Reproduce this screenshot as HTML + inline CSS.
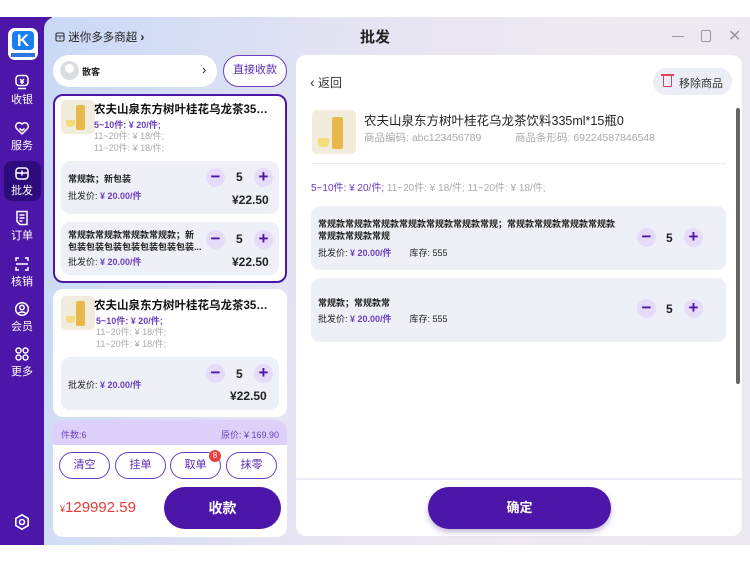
<!DOCTYPE html><html><head><meta charset="utf-8"><style>
*{margin:0;padding:0;box-sizing:border-box}
body{width:750px;height:562px;background:#fff;font-family:"Liberation Sans","Noto Sans CJK SC",sans-serif;position:relative;overflow:hidden;color:#222}
.abs{position:absolute}
#side{left:0;top:17px;width:52px;height:528px;background:#4c17a8}
#main{left:44px;top:17px;width:706px;height:528px;border-radius:12px 0 0 0;background:linear-gradient(100deg,#c9d9f6 0%,#e6e4f3 40%,#efe9f1 70%,#ebe8f2 100%)}
.nav{position:absolute;left:0;width:44px;text-align:center;color:#fff;font-size:11px}
.nav svg{display:block;margin:0 auto 1px}
.card{background:#fff;border-radius:10px}
.pill{border:1.5px solid #6a3fc0;border-radius:16px;color:#5a2bb4;text-align:center;background:#fff}
.t1{font-size:11.5px;font-weight:bold;color:#111;white-space:nowrap;width:184px;overflow:hidden;text-overflow:ellipsis}
.pu{color:#6a3fc0}
.gr{color:#aaa}
.sub{background:#eef0f8;border-radius:9px}
.btn{width:19px;height:19px;border-radius:50%;background:#e6dcfa;color:#4c17a8;text-align:center;line-height:18px;font-size:17px;font-weight:bold}
.img{background:#f2ecdc;border-radius:5px;width:34px;height:34px}
.img i{position:absolute;left:15px;top:5px;width:9px;height:25px;background:#e8b84a;border-radius:2px}
.img b{position:absolute;left:5px;top:20px;width:9px;height:7px;background:#f4dc7a;border-radius:0 0 4px 4px}
</style></head><body>
<div id="side" class="abs"></div>
<div id="main" class="abs"></div>
<div class="abs" style="left:8px;top:28px;width:30px;height:32px;background:#fff;border-radius:7px"></div>
<div class="abs" style="left:12px;top:31px;width:22px;height:19px;background:#1d7ef0;border-radius:4px;color:#fff;font-weight:bold;font-size:17px;text-align:center;line-height:19px">K</div>
<div class="abs" style="left:11px;top:53px;width:24px;height:4px;background:#3470e0"></div>
<div class="nav" style="top:74px"><svg width="16" height="16" viewBox="0 0 16 16" fill="none" stroke="#fff" stroke-width="1.5"><rect x="2" y="1.5" width="12" height="10" rx="3"/><path d="M4 14.5h8M6 5l2 2 2-2M8 7v3M6 8h4"/></svg>收银</div>
<div class="nav" style="top:120px"><svg width="16" height="16" viewBox="0 0 16 16" fill="none" stroke="#fff" stroke-width="1.5"><path d="M8 14L2.5 8.5A3.2 3.2 0 018 4a3.2 3.2 0 015.5 4.5z"/><path d="M5.5 8.5l2.5 2 2.5-2"/></svg>服务</div>
<div class="abs" style="left:4px;top:161px;width:37px;height:40px;background:#2e0b7a;border-radius:8px"></div>
<div class="nav" style="top:165px"><svg width="16" height="16" viewBox="0 0 16 16" fill="none" stroke="#fff" stroke-width="1.5"><rect x="2" y="3" width="12" height="11" rx="3"/><path d="M2 8h12M8 5.5v5M5.5 8h5"/></svg>批发</div>
<div class="nav" style="top:210px"><svg width="16" height="16" viewBox="0 0 16 16" fill="none" stroke="#fff" stroke-width="1.5"><path d="M3 1.5h10v13H6l-3-3z"/><path d="M5.5 5h5M5.5 8h5M5.5 11h3"/></svg>订单</div>
<div class="nav" style="top:256px"><svg width="16" height="16" viewBox="0 0 16 16" fill="none" stroke="#fff" stroke-width="1.5"><path d="M2 5V2h3M11 2h3v3M14 11v3h-3M5 14H2v-3M2 8h12"/></svg>核销</div>
<div class="nav" style="top:301px"><svg width="16" height="16" viewBox="0 0 16 16" fill="none" stroke="#fff" stroke-width="1.5"><circle cx="8" cy="8" r="6.3"/><circle cx="8" cy="6.5" r="2.2"/><path d="M4.5 12.5c1-2 6-2 7 0"/></svg>会员</div>
<div class="nav" style="top:346px"><svg width="16" height="16" viewBox="0 0 16 16" fill="none" stroke="#fff" stroke-width="1.5"><circle cx="4.5" cy="4.5" r="2.5"/><circle cx="11.5" cy="4.5" r="2.5"/><circle cx="4.5" cy="11.5" r="2.5"/><circle cx="11.5" cy="11.5" r="2.5"/></svg>更多</div>
<div class="nav" style="top:513px"><svg width="18" height="18" viewBox="0 0 18 18" fill="none" stroke="#fff" stroke-width="1.6"><path d="M9 1.8l6.2 3.6v7.2L9 16.2l-6.2-3.6V5.4z"/><circle cx="9" cy="9" r="2.5"/></svg></div>

<div class="abs" style="left:55px;top:29px;font-size:11.5px;color:#222"><svg width="10" height="10" viewBox="0 0 10 10" fill="none" stroke="#333" stroke-width="1.1" style="vertical-align:-1px"><rect x="1" y="1" width="8" height="8" rx="1.5"/><path d="M1 4h8M4 6h2"/></svg> 迷你多多商超 <b style="font-size:12px">›</b></div>
<div class="abs" style="left:360px;top:26px;font-size:15px;font-weight:bold">批发</div>
<div class="abs" style="left:672px;top:36px;width:12px;height:1.3px;background:#999"></div>
<div class="abs" style="left:701px;top:30px;width:10px;height:12px;border:1.3px solid #999;border-radius:2px"></div>
<div class="abs" style="left:728px;top:26px;font-size:16px;color:#999">✕</div>

<div class="abs" style="left:53px;top:55px;width:164px;height:32px;background:#fff;border-radius:16px"></div>
<div class="abs" style="left:60px;top:61px;width:19px;height:19px;border-radius:50%;background:#dcdde3"></div>
<div class="abs" style="left:65px;top:64px;width:9px;height:9px;border-radius:50%;background:#fff"></div>
<div class="abs" style="left:82px;top:65px;font-size:9px;font-weight:bold">散客</div>
<div class="abs" style="left:202px;top:62px;font-size:13px">›</div>
<div class="abs pill" style="left:223px;top:55px;width:64px;height:32px;line-height:29px;font-size:11px">直接收款</div>

<div class="abs card" style="left:53px;top:94px;width:234px;height:189px;border:2px solid #4c17a8"></div>
<div class="abs img" style="left:61px;top:100px"><i></i><b></b></div>
<div class="abs t1" style="left:94px;top:101px">农夫山泉东方树叶桂花乌龙茶35ml*15瓶装</div>
<div class="abs pu" style="left:94px;top:118px;font-size:9px;font-weight:bold">5~10件: ¥ 20/件;</div>
<div class="abs gr" style="left:94px;top:130px;font-size:9px;line-height:12px">11~20件: ¥ 18/件;<br>11~20件: ¥ 18/件;</div>
<div class="abs sub" style="left:61px;top:161px;width:218px;height:53px"></div>
<div class="abs" style="left:68px;top:172px;font-size:9px;font-weight:bold">常规款；新包装</div>
<div class="abs" style="left:68px;top:189px;font-size:9px">批发价: <b class="pu">¥ 20.00/件</b></div>
<div class="abs btn" style="left:206px;top:168px">−</div>
<div class="abs" style="left:236px;top:170px;font-size:12px;font-weight:bold">5</div>
<div class="abs btn" style="left:254px;top:168px">+</div>
<div class="abs" style="left:232px;top:193px;font-size:12px;font-weight:bold">¥22.50</div>
<div class="abs sub" style="left:61px;top:222px;width:218px;height:53px"></div>
<div class="abs" style="left:68px;top:229px;font-size:9px;font-weight:bold;line-height:12px">常规款常规款常规款常规款；新<br>包装包装包装包装包装包装包装...</div>
<div class="abs" style="left:68px;top:255px;font-size:9px">批发价: <b class="pu">¥ 20.00/件</b></div>
<div class="abs btn" style="left:206px;top:230px">−</div>
<div class="abs" style="left:236px;top:232px;font-size:12px;font-weight:bold">5</div>
<div class="abs btn" style="left:254px;top:230px">+</div>
<div class="abs" style="left:232px;top:255px;font-size:12px;font-weight:bold">¥22.50</div>

<div class="abs card" style="left:53px;top:289px;width:234px;height:128px"></div>
<div class="abs img" style="left:61px;top:296px"><i></i><b></b></div>
<div class="abs t1" style="left:94px;top:297px">农夫山泉东方树叶桂花乌龙茶35ml*15瓶装</div>
<div class="abs pu" style="left:96px;top:314px;font-size:9px;font-weight:bold">5~10件: ¥ 20/件;</div>
<div class="abs gr" style="left:96px;top:326px;font-size:9px;line-height:12px">11~20件: ¥ 18/件;<br>11~20件: ¥ 18/件;</div>
<div class="abs sub" style="left:61px;top:357px;width:218px;height:53px"></div>
<div class="abs" style="left:68px;top:378px;font-size:9px">批发价: <b class="pu">¥ 20.00/件</b></div>
<div class="abs btn" style="left:206px;top:364px">−</div>
<div class="abs" style="left:236px;top:367px;font-size:12px;font-weight:bold">5</div>
<div class="abs btn" style="left:254px;top:364px">+</div>
<div class="abs" style="left:230px;top:389px;font-size:12px;font-weight:bold">¥22.50</div>

<div class="abs" style="left:53px;top:420px;width:234px;height:117px;background:#fff;border-radius:10px;overflow:hidden"><div style="height:25px;background:#ddd1fb;font-size:9px;color:#6a3fc0;padding:8px 8px;display:flex;justify-content:space-between"><span>件数:6</span><span>原价: ¥ 169.90</span></div></div>
<div class="abs pill" style="left:59px;top:452px;width:51px;height:27px;line-height:24px;font-size:11px">清空</div>
<div class="abs pill" style="left:115px;top:452px;width:51px;height:27px;line-height:24px;font-size:11px">挂单</div>
<div class="abs pill" style="left:170px;top:452px;width:51px;height:27px;line-height:24px;font-size:11px">取单</div>
<div class="abs pill" style="left:226px;top:452px;width:51px;height:27px;line-height:24px;font-size:11px">抹零</div>
<div class="abs" style="left:209px;top:450px;width:12px;height:12px;border-radius:50%;background:#e8413c;color:#fff;font-size:8px;text-align:center;line-height:12px">8</div>
<div class="abs" style="left:60px;top:499px;color:#e83a3a;font-size:15px"><span style="font-size:9px">¥</span>129992.59</div>
<div class="abs" style="left:164px;top:487px;width:117px;height:42px;border-radius:21px;background:#4c17a8;color:#fff;font-size:14px;font-weight:bold;text-align:center;line-height:42px">收款</div>

<div class="abs card" style="left:296px;top:55px;width:446px;height:481px"></div>
<div class="abs" style="left:310px;top:74px;font-size:12px;color:#333"><span style="font-size:14px">‹</span> 返回</div>
<div class="abs" style="left:653px;top:68px;width:79px;height:27px;border-radius:14px;background:#eceef7"></div>
<div class="abs" style="left:663px;top:75px;width:9px;height:12px;border:1.5px solid #e0405a;border-radius:1px"></div>
<div class="abs" style="left:661px;top:74px;width:13px;height:1.5px;background:#e0405a"></div>
<div class="abs" style="left:679px;top:75px;font-size:11px;color:#333">移除商品</div>
<div class="abs" style="left:736px;top:108px;width:4px;height:276px;border-radius:2px;background:#666"></div>
<div class="abs img" style="left:312px;top:110px;width:44px;height:44px"><i style="left:20px;top:7px;width:11px;height:32px"></i><b style="left:6px;top:28px;width:11px;height:9px"></b></div>
<div class="abs" style="left:364px;top:110px;font-size:12.5px;color:#222">农夫山泉东方树叶桂花乌龙茶饮料335ml*15瓶0</div>
<div class="abs gr" style="left:364px;top:130px;font-size:10.5px">商品编码: abc123456789</div>
<div class="abs gr" style="left:515px;top:130px;font-size:10.5px">商品条形码: 69224587846548</div>
<div class="abs" style="left:312px;top:163px;width:414px;height:1px;background:#ececec"></div>
<div class="abs" style="left:311px;top:179px;font-size:10px"><span class="pu">5~10件: ¥ 20/件;</span> <span class="gr">11~20件: ¥ 18/件; 11~20件: ¥ 18/件;</span></div>
<div class="abs sub" style="left:311px;top:206px;width:415px;height:64px"></div>
<div class="abs" style="left:318px;top:218px;font-size:9px;font-weight:bold;line-height:12px">常规款常规款常规款常规款常规款常规款常规；常规款常规款常规款常规款<br>常规款常规款常规</div>
<div class="abs" style="left:318px;top:246px;font-size:9px">批发价: <b class="pu">¥ 20.00/件</b><span style="margin-left:18px">库存: 555</span></div>
<div class="abs btn" style="left:637px;top:228px">−</div>
<div class="abs" style="left:666px;top:231px;font-size:12px;font-weight:bold">5</div>
<div class="abs btn" style="left:684px;top:228px">+</div>
<div class="abs sub" style="left:311px;top:278px;width:415px;height:64px"></div>
<div class="abs" style="left:318px;top:296px;font-size:9px;font-weight:bold">常规款；常规款常</div>
<div class="abs" style="left:318px;top:312px;font-size:9px">批发价: <b class="pu">¥ 20.00/件</b><span style="margin-left:18px">库存: 555</span></div>
<div class="abs btn" style="left:637px;top:299px">−</div>
<div class="abs" style="left:666px;top:302px;font-size:12px;font-weight:bold">5</div>
<div class="abs btn" style="left:684px;top:299px">+</div>
<div class="abs" style="left:296px;top:478px;width:446px;height:2px;background:#eeeaf6"></div>
<div class="abs" style="left:428px;top:487px;width:183px;height:42px;border-radius:21px;background:#4c17a8;color:#fff;font-size:13px;font-weight:bold;text-align:center;line-height:42px;box-shadow:0 3px 6px rgba(60,20,140,.3)">确定</div>
</body></html>
